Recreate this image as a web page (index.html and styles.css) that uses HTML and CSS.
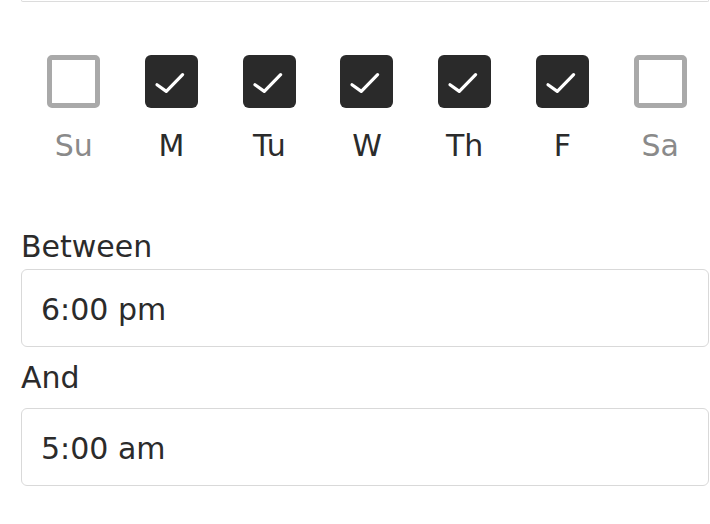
FILE: index.html
```html
<!DOCTYPE html>
<html lang="en">
<head>
<meta charset="utf-8">
<title>Schedule</title>
<link rel="stylesheet" href="styles.css">
</head>
<body>
<div class="page">
  <div class="prev-input"></div>
  <div class="days">
    <div class="day off"><span class="box"></span><span class="name">Su</span></div>
    <div class="day on"><span class="box"><svg viewBox="0 0 53 53" width="53" height="53"><polyline points="12,29.7 21.3,36.4 37.6,19.7" /></svg></span><span class="name">M</span></div>
    <div class="day on"><span class="box"><svg viewBox="0 0 53 53" width="53" height="53"><polyline points="12,29.7 21.3,36.4 37.6,19.7" /></svg></span><span class="name">Tu</span></div>
    <div class="day on"><span class="box"><svg viewBox="0 0 53 53" width="53" height="53"><polyline points="12,29.7 21.3,36.4 37.6,19.7" /></svg></span><span class="name">W</span></div>
    <div class="day on"><span class="box"><svg viewBox="0 0 53 53" width="53" height="53"><polyline points="12,29.7 21.3,36.4 37.6,19.7" /></svg></span><span class="name">Th</span></div>
    <div class="day on"><span class="box"><svg viewBox="0 0 53 53" width="53" height="53"><polyline points="12,29.7 21.3,36.4 37.6,19.7" /></svg></span><span class="name">F</span></div>
    <div class="day off"><span class="box"></span><span class="name">Sa</span></div>
  </div>
  <div class="field field-between">
    <div class="label">Between</div>
    <div class="input">6:00 pm</div>
  </div>
  <div class="field field-and">
    <div class="label">And</div>
    <div class="input">5:00 am</div>
  </div>
</div>
</body>
</html>
```
FILE: styles.css
```css
html, body {
  margin: 0;
  padding: 0;
  background: #ffffff;
}
body {
  font-family: "DejaVu Sans", "Liberation Sans", sans-serif;
  color: #2b2b2b;
  font-size: 30px;
  line-height: 36px;
}
.page {
  padding: 0 1px 0 21px;
}
.prev-input {
  height: 1px;
  border: 1.5px solid #dcdcdc;
  border-top: none;
  border-radius: 0 0 5px 5px;
}
.days {
  display: grid;
  grid-template-columns: repeat(7, 1fr);
  padding-left: 4px;
  margin-top: 52.5px;
}
.day {
  display: flex;
  flex-direction: column;
  align-items: center;
}
.box {
  width: 53px;
  height: 53px;
  box-sizing: border-box;
  border-radius: 6px;
  display: block;
}
.box svg {
  display: block;
}
.box polyline {
  fill: none;
  stroke: #ffffff;
  stroke-width: 3.2;
  stroke-linecap: round;
  stroke-linejoin: round;
}
.on .box {
  background: #2a2a2a;
}
.off .box {
  border: 5px solid #a9a9a9;
  border-radius: 5px;
}
.name {
  margin-top: 20.5px;
}
.off .name {
  color: #8a8a8a;
}
.field-between {
  margin-top: 65px;
}
.field-and {
  margin-top: 13.5px;
}
.field-between .label {
  margin-bottom: 3.5px;
}
.field-and .label {
  margin-bottom: 11.5px;
}
.input {
  height: 78px;
  box-sizing: border-box;
  border: 1.5px solid #d9d9d9;
  border-radius: 6px;
  display: flex;
  align-items: center;
  padding: 5px 0 0 19px;
}
```
